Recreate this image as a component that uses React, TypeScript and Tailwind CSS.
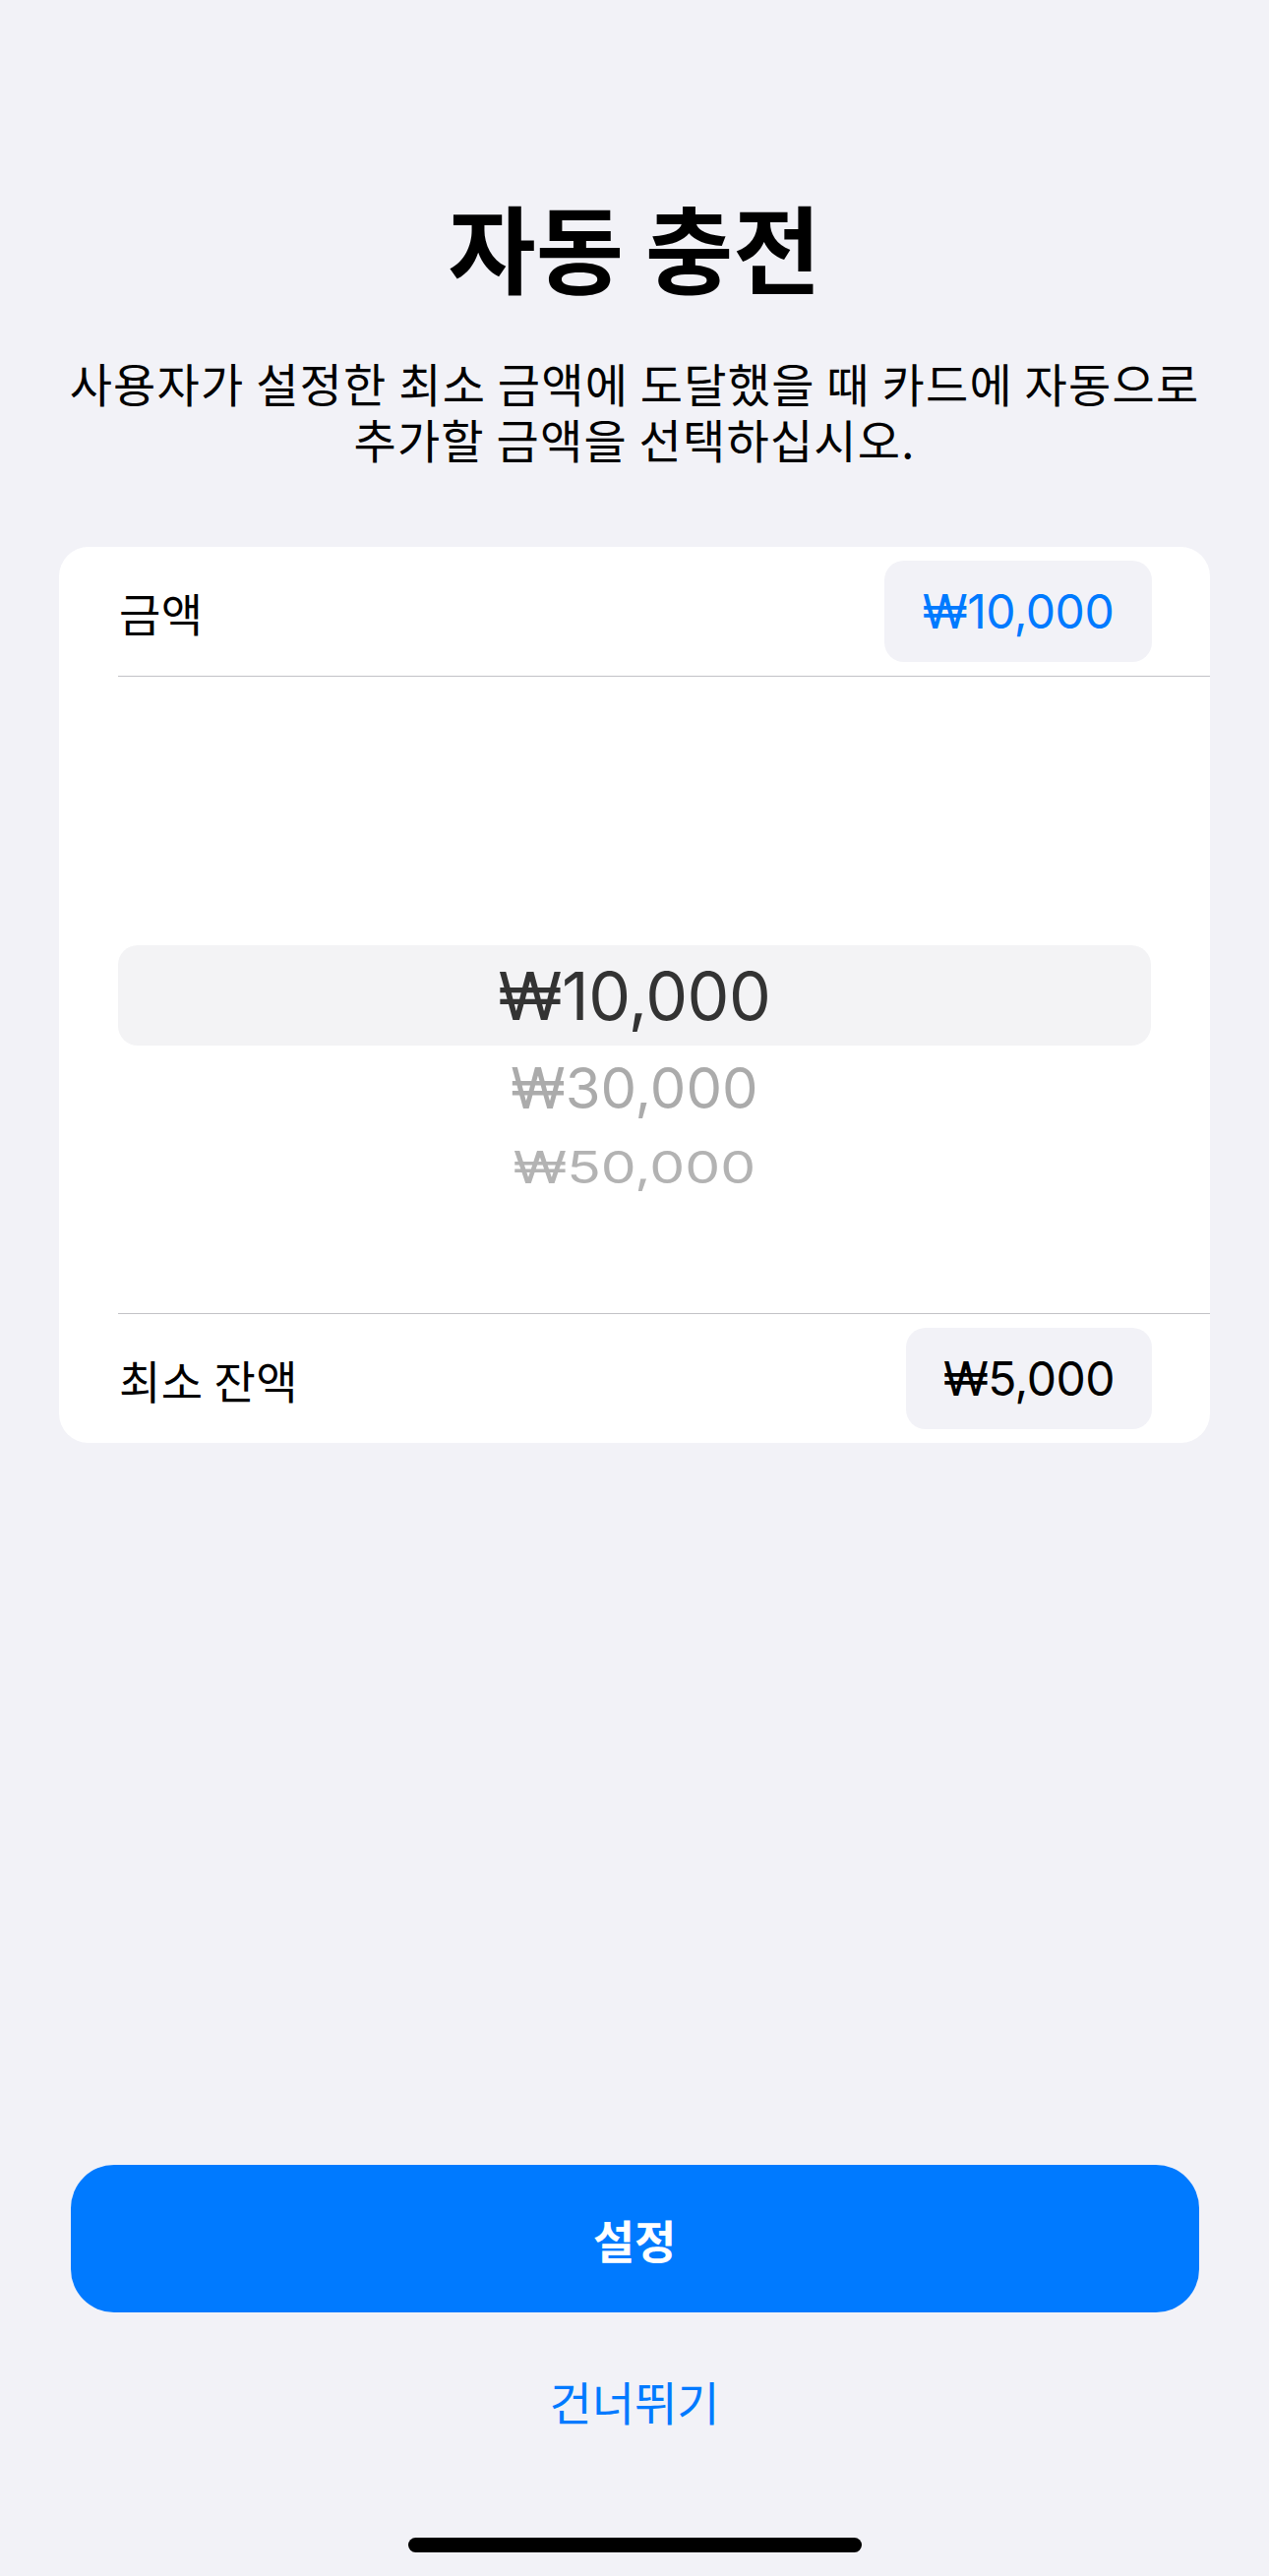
import React from 'react';

const kr = "font-['Noto_Sans_CJK_KR',sans-serif]";
const num = "font-['Inter','Noto_Sans_CJK_KR',sans-serif]";

function Row({ label, value, valueClass, pillWidth }: { label: string; value: string; valueClass: string; pillWidth: string }) {
  return (
    <div className="flex h-[131px] items-center justify-between pl-[61px] pr-[59px]">
      <span className={`${kr} text-[46px] tracking-[0.5px] leading-[60px] text-black`}>{label}</span>
      <div className={`flex h-[103px] ${pillWidth} items-center justify-center rounded-[20px] bg-[#f2f2f7]`}>
        <span className={`${num} text-[48px] tracking-[-0.5px] leading-[60px] ${valueClass}`}>{value}</span>
      </div>
    </div>
  );
}

export default function App() {
  return (
    <div className="flex h-[2619px] w-full flex-col overflow-hidden bg-[#f2f2f7]">
      <h1 className={`${kr} mt-[194px] text-center text-[97px] font-bold leading-[110px] text-black`}>
        자동 충전
      </h1>
      <p className={`${kr} mt-[56px] px-[30px] text-center text-[47px] tracking-[1.2px] leading-[57px] text-black`}>
        사용자가 설정한 최소 금액에 도달했을 때 카드에 자동으로
        <br />
        추가할 금액을 선택하십시오.
      </p>

      <div className="mx-[60px] mt-[82px] overflow-hidden rounded-[30px] bg-white">
        <Row label="금액" value="₩10,000" valueClass="text-[#007aff]" pillWidth="w-[272px]" />
        <div className="ml-[60px] h-px bg-[#c2c2c6]" />

        <div className="flex h-[647px] flex-col px-[60px] pt-[273px]">
          <div className="flex h-[102px] items-center justify-center rounded-[20px] bg-[#f3f3f5]">
            <span className={`${num} text-[68px] tracking-[-0.5px] leading-[80px] text-[#333333]`}>₩10,000</span>
          </div>
          <div className="flex h-[86px] items-center justify-center">
            <span className={`${num} text-[58px] leading-[70px] text-[#ababab]`}>₩30,000</span>
          </div>
          <div className="flex h-[76px] items-center justify-center">
            <span className={`${num} inline-block scale-y-[0.8] text-[57px] leading-[70px] text-[#b3b3b3]`}>₩50,000</span>
          </div>
        </div>

        <div className="ml-[60px] h-px bg-[#c2c2c6]" />
        <Row label="최소 잔액" value="₩5,000" valueClass="text-black" pillWidth="w-[250px]" />
      </div>

      <button className="mx-auto mt-[734px] flex h-[150px] w-[1147px] items-center justify-center rounded-[44px] bg-[#007aff]">
        <span className={`${kr} text-[46px] font-semibold leading-[60px] text-white`}>설정</span>
      </button>
      <div className={`${kr} mt-[60px] h-[60px] text-center text-[47px] leading-[60px] text-[#007aff]`}>
        건너뛰기
      </div>
      <div className="mx-auto mt-[109px] h-[15px] w-[461px] rounded-full bg-black" />
    </div>
  );
}
